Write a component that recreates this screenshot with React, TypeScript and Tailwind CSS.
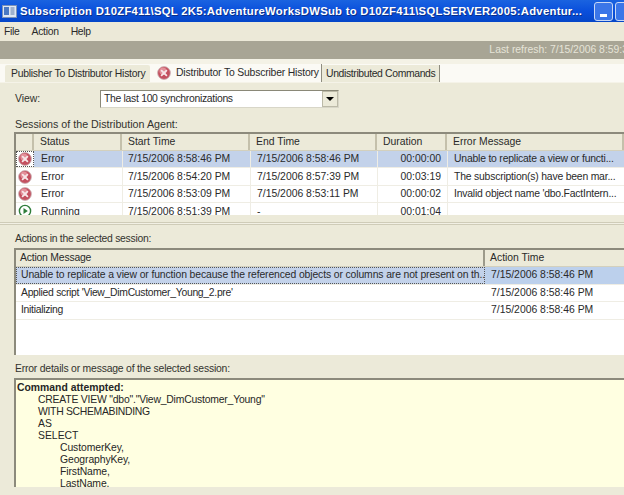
import React from "react";

const font = { fontFamily: '"Liberation Sans", Arial, sans-serif' };

function ErrIcon() {
  return (
    <svg width="14" height="14" viewBox="0 0 14 14">
      <circle cx="7" cy="7" r="6.4" fill="#c4505f" stroke="#c9b4b6" strokeWidth="0.8" />
      <circle cx="6" cy="5" r="3.6" fill="#e3909a" />
      <path d="M4.6 4.6 L9.4 9.4 M9.4 4.6 L4.6 9.4" stroke="#f7e6e8" strokeWidth="1.8" strokeLinecap="round" />
    </svg>
  );
}

function RunIcon() {
  return (
    <svg width="14" height="14" viewBox="0 0 14 14">
      <circle cx="7" cy="7" r="5.6" fill="#fff" stroke="#2f7d3a" strokeWidth="1.4" />
      <path d="M5.5 4 L9.8 7 L5.5 10 Z" fill="#2f7d3a" />
    </svg>
  );
}

const cols = "grid grid-cols-[18px_88px_128px_127px_70px_177px]";

function HeadCell({ children, className = "" }: { children?: React.ReactNode; className?: string }) {
  return (
    <div className={`h-full flex items-center pl-[6px] border-r-2 border-[#c4c0ab] whitespace-nowrap overflow-hidden ${className}`}>
      {children}
    </div>
  );
}

const rows = [
  { s: "Error", st: "7/15/2006 8:58:46 PM", en: "7/15/2006 8:58:46 PM", d: "00:00:00", m: "Unable to replicate a view or functi...", sel: true },
  { s: "Error", st: "7/15/2006 8:54:20 PM", en: "7/15/2006 8:57:39 PM", d: "00:03:19", m: "The subscription(s) have been mar...", sel: false },
  { s: "Error", st: "7/15/2006 8:53:09 PM", en: "7/15/2006 8:53:11 PM", d: "00:00:02", m: "Invalid object name 'dbo.FactIntern...", sel: false },
  { s: "Running", st: "7/15/2006 8:51:39 PM", en: "-", d: "00:01:04", m: "", sel: false },
];

const actions = [
  { m: "Unable to replicate a view or function because the referenced objects or columns are not present on th...", sel: true, cls: "tracking-[-0.12px]" },
  { m: "Applied script 'View_DimCustomer_Young_2.pre'", sel: false, cls: "tracking-[-0.3px]" },
  { m: "Initializing", sel: false, cls: "tracking-[-0.3px]" },
];

function Label({ children, className = "" }: { children: React.ReactNode; className?: string }) {
  return <div className={`pl-[15px] text-[#33332e] leading-[12px] ${className}`}>{children}</div>;
}

export default function App() {
  return (
    <div style={font} className="w-[624px] h-[495px] overflow-hidden bg-[#ecead9] text-[10.4px] text-[#2a2a2a] flex flex-col">
      {/* Title bar */}
      <div className="h-[22px] shrink-0 bg-gradient-to-b from-[#1a63e0] via-[#0a4fdc] to-[#0546c8] flex items-center pl-[2px]">
        <svg width="15" height="13" viewBox="0 0 15 13" className="shrink-0">
          <rect x="0.5" y="0.5" width="14" height="12" fill="#dfe8f5" stroke="#7d93b8" />
          <rect x="2" y="2" width="5" height="8" fill="#4a79c4" />
          <path d="M8.5 3h4M8.5 5h4M8.5 7h4M8.5 9h4" stroke="#5f7ba8" />
        </svg>
        <span className="ml-[3px] text-white font-bold text-[11.3px] tracking-[0.27px] whitespace-nowrap [text-shadow:1px_1px_0_#0a2f88]">
          Subscription D10ZF411\SQL 2K5:AdventureWorksDWSub to D10ZF411\SQLSERVER2005:Adventur...
        </span>
        <div className="ml-auto flex gap-[2px] shrink-0 -mr-[10px]">
          <div className="w-[19px] h-[19px] rounded-[3px] border border-[#c8d8f5] bg-[#3b76e8] flex items-end justify-center pb-[3px]">
            <div className="w-[7px] h-[3px] bg-white" />
          </div>
          <div className="w-[19px] h-[19px] rounded-[3px] border border-[#c8d8f5] bg-[#3b76e8]" />
        </div>
      </div>

      {/* Menu */}
      <div className="h-[19px] shrink-0 bg-[#ece9d8] flex items-center gap-[12px] pl-[4px] tracking-[-0.3px]">
        <span>File</span>
        <span>Action</span>
        <span>Help</span>
      </div>

      {/* Status strip */}
      <div className="h-[18px] shrink-0 bg-[#a8a595] flex items-center justify-end text-[#e6e4d8] whitespace-nowrap overflow-hidden">
        <span className="-mr-[4px]">Last refresh: 7/15/2006 8:59:3</span>
      </div>

      {/* Tabs */}
      <div className="h-[5px] shrink-0 bg-[#f4f2e6]" />
      <div className="h-[19px] shrink-0 bg-[#fbfaf5] flex items-end pl-[5px] border-b border-[#f5f3e8]">
        <div className="h-[17px] w-[145px] bg-[#ecead9] rounded-t-[2px] flex items-center pl-[6px] whitespace-nowrap tracking-[-0.25px]">
          Publisher To Distributor History
        </div>
        <div className="h-[18px] w-[172px] flex items-center pl-[7px] whitespace-nowrap border-r border-[#8f8d80] tracking-[-0.18px]">
          <ErrIcon />
          <span className="ml-[5px]">Distributor To Subscriber History</span>
        </div>
        <div className="h-[17px] w-[118px] bg-[#ecead9] flex items-center pl-[4px] whitespace-nowrap border-r border-[#8f8d80] tracking-[-0.36px]">
          Undistributed Commands
        </div>
      </div>

      {/* View */}
      <div className="flex items-center mt-[7px] h-[17px] shrink-0 pl-[15px]">
        <span className="w-[85px] text-[#33332e]">View:</span>
        <div className="w-[239px] h-[18px] bg-white border border-[#8a8878] border-r-[#d8d6c8] border-b-[#d8d6c8] flex items-center pl-[3px] relative tracking-[-0.3px]">
          The last 100 synchronizations
          <div className="absolute right-0 top-0 w-[16px] h-[16px] bg-[#ecead9] border border-[#bcbaa8] flex items-center justify-center">
            <div className="w-0 h-0 border-l-[4px] border-r-[4px] border-t-[4px] border-l-transparent border-r-transparent border-t-black" />
          </div>
        </div>
      </div>

      <Label className="mt-[11px] text-[10.7px]">Sessions of the Distribution Agent:</Label>

      {/* Sessions grid */}
      <div className="ml-[14px] mt-[2px] h-[83px] shrink-0 bg-white border-t-2 border-l-2 border-[#8c8a7c] overflow-hidden">
        <div className={`${cols} h-[17px] bg-[#ecead9] border-b border-[#d3d0bd]`}>
          <HeadCell />
          <HeadCell>Status</HeadCell>
          <HeadCell>Start Time</HeadCell>
          <HeadCell>End Time</HeadCell>
          <HeadCell>Duration</HeadCell>
          <HeadCell className="border-r-0">Error Message</HeadCell>
        </div>
        {rows.map((r, i) => (
          <div key={i} className={`${cols} h-[17.4px] border-b border-[#efede4] ${r.sel ? "bg-[#c3d2ea]" : "bg-white"}`}>
            <div className={`flex items-center justify-center ${r.sel ? "outline-1 outline-dotted outline-[#555] -outline-offset-1" : ""} bg-white`}>
              {r.s === "Error" ? <ErrIcon /> : <RunIcon />}
            </div>
            <div className="flex items-center pl-[7px]">{r.s}</div>
            <div className="flex items-center pl-[5px] border-l border-[#efede4] whitespace-nowrap">{r.st}</div>
            <div className="flex items-center pl-[6px] border-l border-[#efede4] whitespace-nowrap">{r.en}</div>
            <div className="flex items-center justify-end pr-[6px] border-l border-[#efede4] whitespace-nowrap">{r.d}</div>
            <div className="flex items-center pl-[6px] border-l border-[#efede4] whitespace-nowrap overflow-hidden tracking-[-0.2px]">{r.m}</div>
          </div>
        ))}
      </div>

      {/* Splitter */}
      <div className="mt-[7px] h-[3px] shrink-0 border-t border-b border-[#cfccb8] bg-[#f2f0e4]" />

      <Label className="mt-[8px] tracking-[-0.28px]">Actions in the selected session:</Label>

      {/* Actions grid */}
      <div className="ml-[14px] mt-[3px] h-[107px] shrink-0 bg-white border-t-2 border-l-2 border-[#8c8a7c] overflow-hidden">
        <div className="grid grid-cols-[469px_139px] h-[17px] bg-[#ecead9] border-b border-[#d3d0bd]">
          <div className="flex items-center pl-[4px] border-r-2 border-[#9c9a8a] tracking-[-0.2px]">Action Message</div>
          <div className="flex items-center pl-[5px]">Action Time</div>
        </div>
        {actions.map((a, i) => (
          <div key={i} className="grid grid-cols-[469px_139px] h-[17.5px] border-b border-[#efede4]">
            <div className={`flex items-center pl-[5px] whitespace-nowrap overflow-hidden ${a.cls} ${a.sel ? "bg-[#c3d2ea] outline-1 outline-dotted outline-[#555] -outline-offset-1" : ""}`}>
              {a.m}
            </div>
            <div className={`flex items-center pl-[6px] ${a.sel ? "bg-[#bcd0ec]" : ""}`}>7/15/2006 8:58:46 PM</div>
          </div>
        ))}
      </div>

      <Label className="mt-[8px] tracking-[-0.2px]">Error details or message of the selected session:</Label>

      {/* Details */}
      <div className="ml-[14px] mt-[3px] h-[109px] shrink-0 bg-[#ffffe1] border-t-2 border-l-2 border-[#8c8a7c] overflow-hidden pl-[1px] pt-[2px] leading-[12px] text-[#262626]">
        <div className="font-bold">Command attempted:</div>
        <div className="pl-[21px]">
          <div className="tracking-[-0.2px]">CREATE VIEW "dbo"."View_DimCustomer_Young"</div>
          <div className="tracking-[-0.3px]">WITH SCHEMABINDING</div>
          <div>AS</div>
          <div>SELECT</div>
          <div className="pl-[22px] tracking-[-0.1px]">
            <div>CustomerKey,</div>
            <div>GeographyKey,</div>
            <div>FirstName,</div>
            <div>LastName,</div>
          </div>
        </div>
      </div>
    </div>
  );
}
